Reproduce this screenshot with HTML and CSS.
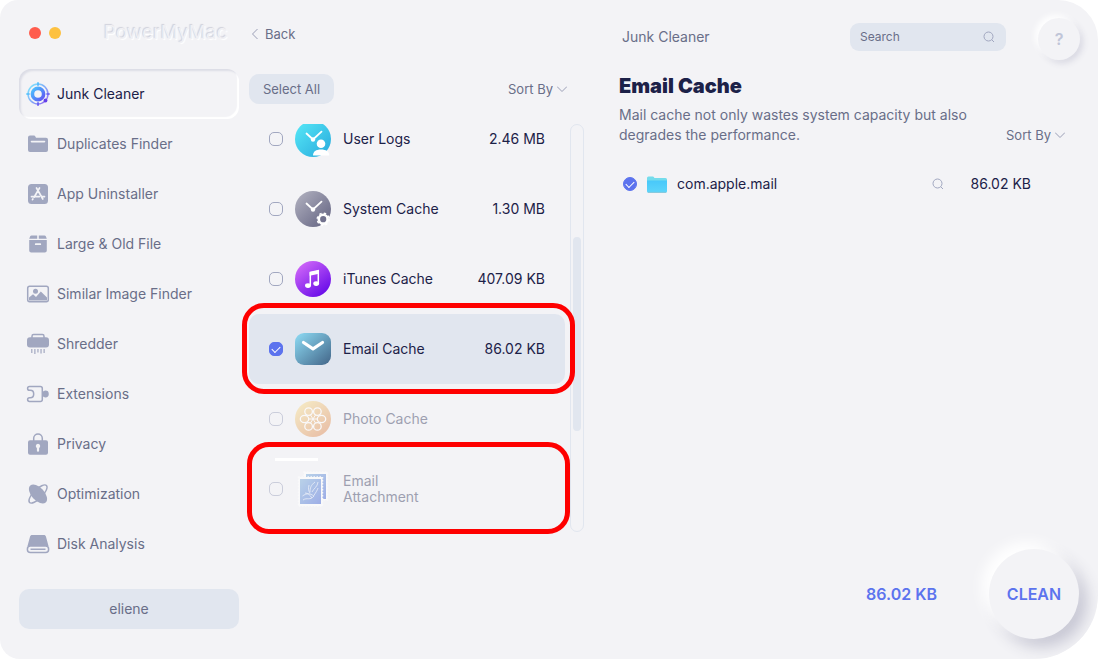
FILE: index.html
```html
<!DOCTYPE html>
<html lang="en">
<head>
<meta charset="utf-8">
<meta name="viewport" content="width=device-width, initial-scale=1">
<title>PowerMyMac</title>
<link rel="stylesheet" href="styles.css">
</head>
<body>
<div class="window">
  <aside class="sidebar">
    <header class="titlebar">
      <button class="dot dot-close" aria-label="Close"></button>
      <button class="dot dot-min" aria-label="Minimize"></button>
      <span class="brand">PowerMyMac</span>
    </header>
    <nav class="nav">
      <a class="nav-item active" href="#junk">
        <svg class="nav-icon" viewBox="0 0 24 24" fill="none">
          <defs><linearGradient id="junk" x1="3" y1="4" x2="20" y2="20" gradientUnits="userSpaceOnUse"><stop stop-color="#4fdcff"/><stop offset=".5" stop-color="#5090fa"/><stop offset="1" stop-color="#6a3cf0"/></linearGradient></defs>
          <circle cx="12" cy="12" r="10" stroke="url(#junk)" stroke-width="1.500" stroke-opacity=".7"/>
          <circle cx="12" cy="12" r="5.600" stroke="url(#junk)" stroke-width="3.600"/>
          <path d="M12 .3v3.400M12.010 20.300v3.400M.3 12h3.400M20.300 12.010h3.400" stroke="url(#junk)" stroke-width="1.700"/>
          <circle cx="19.500" cy="18.500" r="1.900" fill="#6440ea"/>
        </svg>
        <span>Junk Cleaner</span>
      </a>
      <a class="nav-item" href="#duplicates">
        <svg class="nav-icon" viewBox="0 0 24 24" fill="currentColor"><path fill-rule="evenodd" d="M2 5.500a2 2 0 0 1 2-2h3.500c1 0 1.600.4 2 1.200l.5 1H20a2 2 0 0 1 2 2V18a2 2 0 0 1-2 2H4a2 2 0 0 1-2-2zM5.500 8.800a.8.8 0 0 0 0 1.600h13a.8.8 0 0 0 0-1.600z"/></svg>
        <span>Duplicates Finder</span>
      </a>
      <a class="nav-item" href="#uninstaller">
        <svg class="nav-icon" viewBox="0 0 24 24"><rect x="2" y="2" width="20" height="20" rx="3.500" fill="currentColor"/><path d="M10.500 6l6.300 11M13.500 6l-5.400 9.200M5.500 14.600h7.800M16 14.600h2.500M6.900 17l-.4.700" stroke="#f3f3f6" stroke-width="1.700" stroke-linecap="round" fill="none"/></svg>
        <span>App Uninstaller</span>
      </a>
      <a class="nav-item" href="#large">
        <svg class="nav-icon" viewBox="0 0 24 24" fill="currentColor"><path d="M5.500 3.400h5.700v3.300H3.200l1-2.500c.2-.5.700-.8 1.300-.8zM12.800 3.400h5.700c.6 0 1.100.3 1.300.8l1 2.500h-8z"/><path fill-rule="evenodd" d="M3.200 8h17.600v10.500a2 2 0 0 1-2 2H5.200a2 2 0 0 1-2-2zm6.500 3.300a.8.800 0 0 0 0 1.700h4.600a.8.800 0 0 0 0-1.700z"/></svg>
        <span>Large &amp; Old File</span>
      </a>
      <a class="nav-item" href="#similar">
        <svg class="nav-icon" viewBox="0 0 24 24"><rect x="1.700" y="4.200" width="20.600" height="15.600" rx="2" fill="none" stroke="currentColor" stroke-width="1.500"/><circle cx="9.500" cy="9.300" r="2.500" fill="currentColor"/><path d="M3 18.500v-3l4-3.200 3 2.600 4.800-5.400 6.200 6v3z" fill="currentColor"/></svg>
        <span>Similar Image Finder</span>
      </a>
      <a class="nav-item" href="#shredder">
        <svg class="nav-icon" viewBox="0 0 24 24" fill="currentColor"><path d="M6 6V4.200c0-1 .6-1.600 1.600-1.600h8.800c1 0 1.600.6 1.600 1.600V6" fill="none" stroke="currentColor" stroke-width="1.500"/><rect x="1" y="5.200" width="22" height="10.200" rx="3"/><path d="M5 17h1.500v4H5zM8.100 17h1.500v5H8.100zM11.200 17h1.500v3.500h-1.500zM14.300 17h1.500v4.500h-1.500zM17.400 17h1.500v4h-1.500z" opacity=".8"/></svg>
        <span>Shredder</span>
      </a>
      <a class="nav-item" href="#extensions">
        <svg class="nav-icon" viewBox="0 0 24 24"><path d="M3.500 4.500h10.800c1.200 0 2 .8 2 2v11c0 1.200-.8 2-2 2H3.500c-1.200 0-1.900-.8-1.900-1.900 0-1.100.8-1.800 1.900-1.800h.8c2 0 3.400-1.600 3.400-3.800S6.300 8.300 4.300 8.300h-.8c-1.100 0-1.900-.8-1.900-1.900s.7-1.900 1.900-1.900z" fill="none" stroke="currentColor" stroke-width="1.500"/><path d="M17 9.500c.6 0 1-.9 2.400-.9a3.400 3.400 0 0 1 0 6.800c-1.400 0-1.800-.9-2.400-.9z" fill="currentColor"/></svg>
        <span>Extensions</span>
      </a>
      <a class="nav-item" href="#privacy">
        <svg class="nav-icon" viewBox="0 0 24 24"><path d="M7.700 9V6.200a4.300 4.300 0 0 1 8.600 0V9" fill="none" stroke="currentColor" stroke-width="1.500"/><path fill-rule="evenodd" fill="currentColor" d="M4 8.300h16a2 2 0 0 1 2 2v10.400a2 2 0 0 1-2 2H4a2 2 0 0 1-2-2V10.300a2 2 0 0 1 2-2zm8 3.500a2.200 2.200 0 0 0-1.100 4.100v2.800a1.100 1.100 0 0 0 2.200 0v-2.800a2.200 2.200 0 0 0-1.100-4.100z"/></svg>
        <span>Privacy</span>
      </a>
      <a class="nav-item" href="#optimization">
        <svg class="nav-icon" viewBox="0 0 24 24"><ellipse cx="12" cy="12" rx="12" ry="4.500" transform="rotate(-45 12 12)" fill="none" stroke="currentColor" stroke-width="1.400"/><ellipse cx="12" cy="12" rx="11.500" ry="6.500" transform="rotate(48 12 12)" fill="currentColor"/></svg>
        <span>Optimization</span>
      </a>
      <a class="nav-item" href="#disk">
        <svg class="nav-icon" viewBox="0 0 24 24"><path d="M6.300 3h11.400c1.300 0 2 .6 2.300 1.800L22.500 14h-21L4 4.800C4.300 3.600 5 3 6.300 3z" fill="currentColor"/><rect x="1.400" y="14" width="21.200" height="6.600" rx="3" fill="none" stroke="currentColor" stroke-width="1.500"/><path d="M4.500 17.300h15" stroke="currentColor" stroke-width="1.500"/></svg>
        <span>Disk Analysis</span>
      </a>
    </nav>
    <button class="user">eliene</button>
  </aside>

  <section class="categories">
    <a class="back" href="#back"><svg class="back-icon" viewBox="0 0 8 12"><path d="M6.500 1L1.500 6l5 5"/></svg>Back</a>
    <div class="list-tools">
      <button class="select-all">Select All</button>
      <span class="sort"><select aria-label="Sort categories"><option>Sort By</option></select><svg viewBox="0 0 10 6"><path d="M0 .5l5 5 5-5"/></svg></span>
    </div>
    <div class="list-area">
      <div class="list">
        <label class="row">
          <input class="check" type="checkbox">
          <svg class="row-icon" viewBox="0 0 36 36">
            <defs><linearGradient id="logs" x1="0" y1="0" x2="1" y2="1"><stop stop-color="#58eaf8"/><stop offset="1" stop-color="#28a9dc"/></linearGradient></defs>
            <circle cx="18" cy="18" r="18" fill="url(#logs)"/>
            <path d="M11.500 12.500l6.500 6 8.500-7.800" fill="none" stroke="#fff" stroke-width="1.800" stroke-linecap="round"/><circle cx="18" cy="18.500" r="2.200" fill="#fff"/>
            <circle cx="26" cy="22.800" r="4.300" fill="#fff"/><path d="M18 34.500c0-4 3-6 8-6s8.300 2 8.300 6z" fill="#fff"/>
          </svg>
          <span class="name">User Logs</span><span class="size">2.46 MB</span>
        </label>
        <label class="row">
          <input class="check" type="checkbox">
          <svg class="row-icon" viewBox="0 0 36 36">
            <defs><linearGradient id="sys" x1="0" y1="0" x2="1" y2="1"><stop stop-color="#b4b4c2"/><stop offset="1" stop-color="#60607f"/></linearGradient></defs>
            <circle cx="18" cy="18" r="18" fill="url(#sys)"/>
            <path d="M11.500 12.500l6.500 6 8.500-7.800" fill="none" stroke="#fff" stroke-width="1.800" stroke-linecap="round"/><circle cx="18" cy="18.500" r="2.200" fill="#fff"/>
            <circle cx="28.200" cy="28.200" r="4.400" fill="#72728e" stroke="#fff" stroke-width="2.600"/><circle cx="28.200" cy="28.200" r="6" fill="none" stroke="#fff" stroke-width="1.400" stroke-dasharray="2.400 2.300"/>
          </svg>
          <span class="name">System Cache</span><span class="size">1.30 MB</span>
        </label>
        <label class="row">
          <input class="check" type="checkbox">
          <svg class="row-icon" viewBox="0 0 36 36">
            <defs><linearGradient id="tunes" x1=".1" y1=".1" x2=".8" y2="1"><stop stop-color="#cf66f8"/><stop offset="1" stop-color="#6408e8"/></linearGradient></defs>
            <circle cx="18" cy="18" r="18" fill="url(#tunes)"/>
            <path d="M15.300 24.500V11.800l8-1.700v12.500" fill="none" stroke="#fff" stroke-width="1.500"/><path d="M14.600 10.700l9.400-2v4l-9.400 2z" fill="#fff"/><ellipse cx="13" cy="24.600" rx="3" ry="2.400" fill="#fff"/><ellipse cx="21.200" cy="22.600" rx="2.900" ry="2.400" fill="#fff"/>
          </svg>
          <span class="name">iTunes Cache</span><span class="size">407.09 KB</span>
        </label>
        <label class="row selected">
          <input class="check" type="checkbox" checked>
          <svg class="row-icon" viewBox="0 0 36 36">
            <defs><linearGradient id="mail" x1="0" y1="0" x2="1" y2="1"><stop stop-color="#8edcf5"/><stop offset="1" stop-color="#426588"/></linearGradient></defs>
            <rect y="2" width="36" height="32" rx="9" fill="url(#mail)"/>
            <path d="M8.500 11.500l9.500 6.300 9.500-6.300" fill="none" stroke="#fff" stroke-width="3.200" stroke-linecap="round" stroke-linejoin="round"/>
          </svg>
          <span class="name">Email Cache</span><span class="size">86.02 KB</span>
        </label>
        <label class="row faded">
          <input class="check" type="checkbox">
          <svg class="row-icon" viewBox="0 0 36 36">
            <defs><linearGradient id="photo" x1=".1" y1="0" x2=".9" y2="1"><stop stop-color="#f8e496"/><stop offset="1" stop-color="#df8857"/></linearGradient></defs>
            <circle cx="18" cy="18" r="18" fill="url(#photo)"/>
            <g fill="none" stroke="#fff" stroke-width="1.300"><ellipse cx="9.500" cy="18" rx="4.200" ry="3.700"/><ellipse cx="26.500" cy="18" rx="4.200" ry="3.700"/><circle cx="13.600" cy="10.600" r="3.800"/><circle cx="22.400" cy="10.600" r="3.800"/><circle cx="13.600" cy="25.400" r="3.800"/><circle cx="22.400" cy="25.400" r="3.800"/><path d="M15.500 14l5 8M20.500 14l-5 8M13.500 18h9" stroke-width="1"/></g>
          </svg>
          <span class="name">Photo Cache</span>
        </label>
        <label class="row faded">
          <input class="check" type="checkbox">
          <svg class="row-icon" viewBox="0 0 36 36">
            <defs><linearGradient id="stamp" x1="0" y1="0" x2="1" y2="1"><stop stop-color="#80b1dc"/><stop offset="1" stop-color="#4a6ad8"/></linearGradient></defs>
            <rect x="9" y="1" width="23.500" height="28" fill="#fff" stroke="#fff" stroke-width="1.500" stroke-dasharray="1.500 1.500"/><rect x="11" y="3" width="20" height="25" fill="url(#stamp)"/>
            <rect x="3.500" y="6" width="24" height="29" fill="#fff" stroke="#fff" stroke-width="1.500" stroke-dasharray="1.500 1.500"/><rect x="5" y="8" width="21" height="25" fill="url(#stamp)"/>
            <path d="M23 11c-.5 5-4 6-6 10M20 11c-4 3-5 6-5 10M14 14c-1 4-.4 6 1 8M7.500 25c4-3 8-3 11 0 2-3 4-6 4.500-8M8 29c4-3 7 1 11-4M10 22c3 0 5 2 7 5" fill="none" stroke="#e4ecfa" stroke-width="1" stroke-opacity=".8"/>
          </svg>
          <span class="name">Email<br>Attachment</span>
        </label>
      </div>
      <div class="track"><div class="thumb"></div></div>
      <div class="dash"></div>
      <div class="mark mark-cache"></div>
      <div class="mark mark-attachment"></div>
    </div>
  </section>

  <main class="detail">
    <header class="detail-head">
      <span class="crumb">Junk Cleaner</span>
      <div class="search"><input type="text" placeholder="Search" aria-label="Search"><svg class="lens" viewBox="0 0 12 12"><circle cx="5.500" cy="5.500" r="4.500"/><path d="M8.800 8.800l2.200 2.200"/></svg></div>
      <button class="help" aria-label="Help">?</button>
    </header>
    <h1 class="title">Email Cache</h1>
    <div class="summary">
      <p class="desc">Mail cache not only wastes system capacity but also degrades the performance.</p>
      <span class="sort"><select aria-label="Sort files"><option>Sort By</option></select><svg viewBox="0 0 10 6"><path d="M0 .5l5 5 5-5"/></svg></span>
    </div>
    <div class="file">
      <input class="check" type="checkbox" id="file" checked>
      <svg class="folder" viewBox="0 0 20 17"><defs><linearGradient id="folder" x1="0" y1="0" x2="0" y2="1"><stop stop-color="#48c8fa"/><stop offset="1" stop-color="#5dd5fa"/></linearGradient></defs><path d="M0 2a1.500 1.500 0 0 1 1.500-1.500h4c.8 0 1.200.3 1.600 1L7.500 2H18.500A1.500 1.500 0 0 1 20 3.500V8H0z" fill="#74dcec"/><path d="M0 4.500h20v10.800a1.500 1.500 0 0 1-1.500 1.500h-17A1.500 1.500 0 0 1 0 15.300z" fill="url(#folder)"/><path d="M1 16.400h18" stroke="#8bbdce" stroke-width=".7"/></svg>
      <label class="file-name" for="file">com.apple.mail</label>
      <button class="reveal" aria-label="Show in Finder"><svg class="lens" viewBox="0 0 12 12"><circle cx="5.500" cy="5.500" r="4.500"/><path d="M8.800 8.800l2.200 2.200"/></svg></button>
      <span class="file-size">86.02 KB</span>
    </div>
    <footer class="actions">
      <span class="total">86.02 KB</span>
      <button class="clean">CLEAN</button>
    </footer>
  </main>
</div>
</body>
</html>
```
FILE: styles.css
```css
* { box-sizing: border-box; }

body {
  margin: 0;
  background: #fff;
  color: #1c2148;
  font: 14px/20px Inter, "Liberation Sans", sans-serif;
}

button, input, select { font: inherit; color: inherit; }
button { border: 0; padding: 0; background: none; cursor: pointer; }
a { color: inherit; text-decoration: none; }

.window {
  display: grid;
  grid-template-columns: 239px 346px 1fr;
  min-height: 100vh;
  overflow: hidden;
  background: #f3f3f6;
  border-radius: 18px 40px 64px 20px;
}

/* Sidebar */
.sidebar {
  display: flex;
  flex-direction: column;
  padding: 0 0 30px 19px;
}
.titlebar {
  display: flex;
  align-items: center;
  gap: 8px;
  height: 69px;
  padding: 0 0 4px 10px;
}
.dot { width: 12px; height: 12px; border-radius: 50%; }
.dot-close { background: #ff5c4d; }
.dot-min { background: #fdc140; }
.brand {
  margin-left: 35px;
  color: #f0f0f4;
  font-size: 19px;
  text-shadow: -1px -1px 1px #d0d1db, 1px 1px 1px #fff;
}
.nav { display: flex; flex-direction: column; }
.nav-item {
  display: flex;
  align-items: center;
  gap: 7px;
  height: 50px;
  padding-left: 7px;
  border-radius: 12px;
  color: #696e88;
}
.nav-icon { width: 24px; height: 24px; color: #a1a7c0; overflow: visible; }
.active { color: #1c2148; box-shadow: inset 2px 2px 2px #dcdde6, inset -2px -2px 1px #fff; }
.user {
  height: 40px;
  margin-top: auto;
  border-radius: 10px;
  background: #e1e6ef;
  color: #696e88;
}

/* Categories */
.categories { padding: 24px 1px 0 10px; }
.back {
  display: flex;
  align-items: center;
  gap: 6px;
  padding-left: 2px;
  color: #696e88;
  font-size: 13px;
}
.back-icon { width: 8px; height: 12px; }
.back-icon path, .sort path { fill: none; stroke: #9a9eb6; stroke-width: 1; }
.list-tools {
  display: flex;
  align-items: center;
  justify-content: space-between;
  padding: 30px 17px 20px 0;
}
.select-all {
  width: 85px;
  height: 30px;
  border-radius: 10px;
  background: #e1e6ef;
  color: #696e88;
  font-size: 13px;
}
.sort { display: flex; align-items: center; gap: 4px; color: #696e88; font-size: 13px; }
.sort select { appearance: none; border: 0; padding: 0; background: none; }
.sort svg { width: 10px; height: 6px; }
.list-area { position: relative; display: flex; gap: 5px; height: 408px; }
.list { flex: 1; overflow: hidden; }
.row {
  display: flex;
  align-items: center;
  gap: 12px;
  height: 70px;
  padding: 0 20px;
  border-radius: 10px;
}
.row:first-child { margin-top: -20px; }
.selected { background: #e1e6ef; }
.faded > * { opacity: .5; }
.row-icon { flex: none; width: 36px; height: 36px; }
.name { line-height: 16px; }
.faded .name { color: #4a4e6d; }
.size { margin-left: auto; white-space: nowrap; }
.check {
  display: grid;
  flex: none;
  width: 14px;
  height: 14px;
  margin: 0;
  appearance: none;
  border: 1px solid #a1a7c0;
  border-radius: 5px;
}
.check:checked { border-color: #5c73ee; background: #5c73ee; }
.check:checked::after {
  content: "";
  width: 7px;
  height: 4px;
  margin: 3px auto;
  border: solid #fff;
  border-width: 0 0 1px 1px;
  transform: rotate(-45deg);
}
.track {
  width: 14px;
  padding: 112px 2px 0;
  border: 1px solid #e1e6ef;
  border-radius: 7px;
}
.thumb { height: 194px; border-radius: 5px; background: #e1e6ef; }
.dash {
  position: absolute;
  top: 334px;
  left: 26px;
  width: 43px;
  height: 3px;
  background: #fff;
}
.mark { position: absolute; border: 5px solid #fe0000; border-radius: 22px; }
.mark-cache { top: 179px; left: -7px; right: 9px; height: 91px; }
.mark-attachment { top: 318px; left: -2px; right: 14px; height: 92px; }

/* Detail */
.detail { display: flex; flex-direction: column; padding: 18px 18px 20px 34px; }
.detail-head { display: flex; align-items: center; height: 42px; }
.crumb { margin: 0 auto 4px 3px; color: #696e88; }
.search {
  display: flex;
  align-items: center;
  width: 156px;
  height: 28px;
  margin: 0 32px 4px 0;
  padding: 0 11px 0 10px;
  border-radius: 9px;
  background: #e1e6ef;
}
.search input {
  flex: 1;
  min-width: 0;
  padding: 0;
  border: 0;
  background: none;
  font-size: 12px;
}
.search input::placeholder { color: #696e88; opacity: 1; }
.lens { display: block; width: 12px; height: 12px; fill: none; stroke: #a1a7c0; }
.help {
  width: 42px;
  height: 42px;
  border-radius: 50%;
  background: #f3f3f6;
  color: #c0c5d8;
  font-size: 16px;
  font-weight: 600;
  box-shadow: -3px -3px 6px #fff, 3px 3px 6px #d8d8e2;
}
.title { margin: 14px 0 7px; font-size: 20px; line-height: 24px; font-weight: 900; }
.summary { display: flex; align-items: flex-end; justify-content: space-between; padding-right: 15px; }
.desc { max-width: 350px; margin: 0; color: #696e88; }
.file { display: flex; align-items: center; margin-top: 29px; padding: 0 49px 0 4px; line-height: 20px; }
.folder { width: 20px; height: 17px; margin: 0 10px; }
.file .check { border-radius: 7px; }
.reveal { margin-left: auto; }
.file-size { width: 87px; text-align: right; }
.actions {
  display: flex;
  align-items: center;
  justify-content: flex-end;
  gap: 52px;
  margin-top: auto;
  padding-right: 1px;
  color: #5c73ee;
  font-size: 16px;
  font-weight: 600;
}
.clean {
  width: 90px;
  height: 90px;
  border-radius: 50%;
  background: #f3f3f6;
  box-shadow: -7px -7px 14px #fff, 8px 8px 16px #c6c6d3;
}
```
